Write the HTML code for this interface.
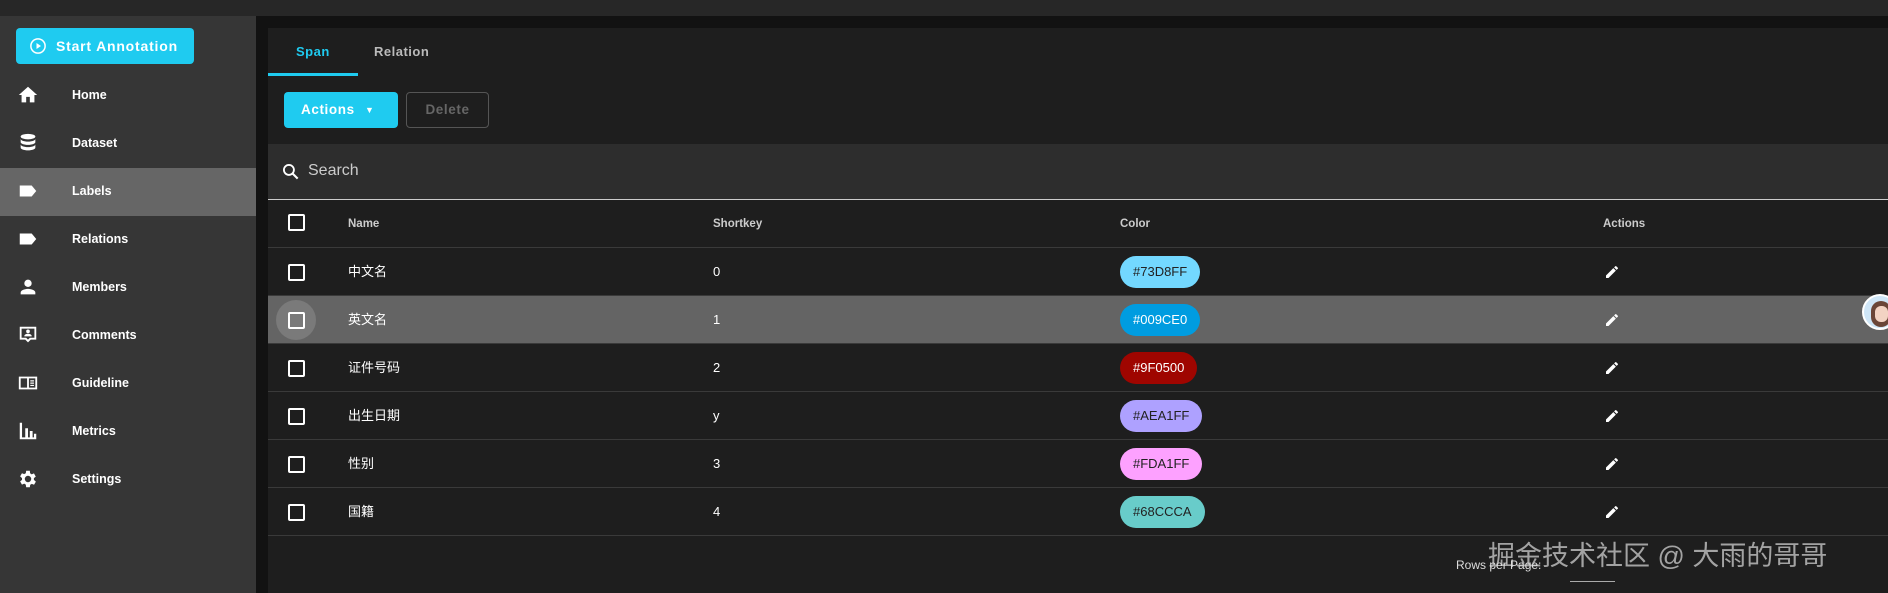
<!DOCTYPE html>
<html><head><meta charset="utf-8"><style>
*{margin:0;padding:0;box-sizing:border-box}
body{width:1888px;height:593px;overflow:hidden;background:#121212;font-family:"Liberation Sans","Noto Sans CJK SC",sans-serif;color:#fff;position:relative}
.abs{position:absolute}
#top{left:0;top:0;width:1888px;height:16px;background:#272727}
#side{left:0;top:16px;width:256px;height:577px;background:#363636}
#card{left:268px;top:28px;width:1620px;height:565px;background:#1e1e1e}
.nav{position:absolute;left:0;width:256px;height:48px;display:flex;align-items:center;font-size:12.5px;font-weight:bold}
.nav svg{position:absolute;left:17px;width:22px;height:22px;fill:#fff}
.nav span{position:absolute;left:72px}
.row{position:absolute;left:268px;width:1620px;height:48px;border-bottom:1px solid #3a3a3a;font-size:13px;line-height:16px}
.cb{position:absolute;left:20px;top:16px;width:17px;height:17px;border:2px solid #fff;border-radius:2px}
.c1{position:absolute;left:80px;top:16px;line-height:16px}
.c2{position:absolute;left:445px;top:16px}
.chip{position:absolute;left:852px;top:8px;height:32px;border-radius:16px;padding:0 13px;line-height:32px;font-size:13px}
.pen{position:absolute;left:1336px;top:16px;width:16px;height:16px}
</style></head><body>
<div id="top" class="abs"></div>
<div id="side" class="abs"></div>
<div class="abs" style="left:16px;top:28px;width:178px;height:36px;background:#1fcbf0;border-radius:4px;font-size:14px;font-weight:bold;letter-spacing:0.8px;line-height:36px">
<svg class="abs" style="left:13px;top:9px" width="18" height="18" viewBox="0 0 24 24"><circle cx="12" cy="12" r="9.5" fill="none" stroke="#fff" stroke-width="2"/><path d="M10 8v8l6-4z" fill="#fff"/></svg>
<span style="position:absolute;left:40px">Start Annotation</span></div>
<div class="abs" style="left:0;top:168px;width:256px;height:48px;background:#666"></div>
<div class="nav" style="top:71px"><svg viewBox="0 0 24 24"><path d="M10 20v-6h4v6h5v-8h3L12 3 2 12h3v8z"/></svg><span>Home</span></div>
<div class="nav" style="top:119px"><svg viewBox="0 0 24 24"><ellipse cx="12" cy="5" rx="8" ry="3"/><path d="M4 7.5c0 1.7 3.6 3 8 3s8-1.3 8-3V11c0 1.7-3.6 3-8 3s-8-1.3-8-3zM4 13.5c0 1.7 3.6 3 8 3s8-1.3 8-3V17c0 1.7-3.6 3-8 3s-8-1.3-8-3z"/></svg><span>Dataset</span></div>
<div class="nav" style="top:167px"><svg viewBox="0 0 24 24"><path d="M3 6h13l5 6-5 6H3z"/></svg><span>Labels</span></div>
<div class="nav" style="top:215px"><svg viewBox="0 0 24 24"><path d="M3 6h13l5 6-5 6H3z"/></svg><span>Relations</span></div>
<div class="nav" style="top:263px"><svg viewBox="0 0 24 24"><circle cx="12" cy="8" r="4"/><path d="M4 20v-2c0-2.7 5.3-4 8-4s8 1.3 8 4v2z"/></svg><span>Members</span></div>
<div class="nav" style="top:311px"><svg viewBox="0 0 24 24"><path d="M3 3h18v14h-6l-3 3-3-3H3zM5 5v10h5l2 2 2-2h5V5z"/><circle cx="12" cy="8" r="2"/><path d="M8 13c0-1.5 2.5-2.3 4-2.3s4 .8 4 2.3v.5H8z"/></svg><span>Comments</span></div>
<div class="nav" style="top:359px"><svg viewBox="0 0 24 24"><path d="M2 5h20v14H2zM4 7v10h7V7zm9 0v10h7V7zm1.5 2h4v1.3h-4zm0 2.5h4v1.3h-4zm0 2.5h4v1.3h-4z"/></svg><span>Guideline</span></div>
<div class="nav" style="top:407px"><svg viewBox="0 0 24 24"><path d="M3 3h2.5v16H9V9h3v10h2V12h3v7h1.5v-4H21v6H3z"/></svg><span>Metrics</span></div>
<div class="nav" style="top:455px"><svg viewBox="0 0 24 24"><path d="M19.4 13a7.5 7.5 0 000-2l2.1-1.6-2-3.5-2.5 1a7 7 0 00-1.7-1L15 3h-4l-.4 2.7a7 7 0 00-1.7 1l-2.5-1-2 3.5L6.5 11a7.5 7.5 0 000 2l-2.1 1.6 2 3.5 2.5-1a7 7 0 001.7 1L11 21h4l.4-2.7a7 7 0 001.7-1l2.5 1 2-3.5zM13 15.5a3.5 3.5 0 110-7 3.5 3.5 0 010 7z" transform="translate(-1 0)"/></svg><span>Settings</span></div>

<div id="card" class="abs"></div>
<div class="abs" style="left:296px;top:44px;font-size:13px;font-weight:bold;color:#1fcbf0;letter-spacing:.5px">Span</div>
<div class="abs" style="left:374px;top:44px;font-size:13px;font-weight:bold;color:#bbb;letter-spacing:.5px">Relation</div>
<div class="abs" style="left:268px;top:73px;width:90px;height:3px;background:#1fcbf0"></div>
<div class="abs" style="left:284px;top:92px;width:114px;height:36px;background:#1fcbf0;border-radius:4px;font-size:13.5px;font-weight:bold;line-height:36px;letter-spacing:.6px"><span style="position:absolute;left:17px">Actions</span><span style="position:absolute;left:81px;top:0;font-size:9px">▼</span></div>
<div class="abs" style="left:406px;top:92px;width:83px;height:36px;border:1px solid #555;border-radius:4px;font-size:13.5px;font-weight:bold;color:#666;line-height:34px;text-align:center;letter-spacing:.6px">Delete</div>
<div class="abs" style="left:268px;top:144px;width:1620px;height:56px;background:#2d2d2d;border-bottom:1.5px solid #ccc"></div>
<svg class="abs" style="left:281px;top:162px" width="20" height="20" viewBox="0 0 24 24"><circle cx="9.5" cy="9.5" r="6" fill="none" stroke="#fff" stroke-width="2.2"/><path d="M14 14l6 6" stroke="#fff" stroke-width="2.5"/></svg>
<div class="abs" style="left:308px;top:162px;font-size:16px;line-height:18px;color:#ccc">Search</div>

<div class="row" style="top:201px;height:47px;font-size:11.5px;font-weight:bold;color:#ccc">
<div class="cb" style="top:13px"></div><div class="c1" style="top:15px">Name</div><div class="c2" style="top:15px">Shortkey</div><div style="position:absolute;left:852px;top:15px">Color</div><div style="position:absolute;left:1335px;top:15px">Actions</div></div>

<div class="row" style="top:248px"><div class="cb"></div><div class="c1">中文名</div><div class="c2">0</div><div class="chip" style="background:#73d8ff;color:#222">#73D8FF</div><svg class="pen" viewBox="0 0 24 24"><path fill="#fff" d="M3 17.25V21h3.75L17.8 9.94l-3.75-3.75zM20.7 7.04a1 1 0 000-1.41l-2.34-2.34a1 1 0 00-1.41 0l-1.830 1.83 3.75 3.75z"/></svg></div>
<div class="row" style="top:296px;background:#646464"><div class="abs" style="left:8px;top:4px;width:40px;height:40px;border-radius:50%;background:#7a7a7a"></div><div class="cb"></div><div class="c1">英文名</div><div class="c2">1</div><div class="chip" style="background:#009ce0">#009CE0</div><svg class="pen" viewBox="0 0 24 24"><path fill="#fff" d="M3 17.25V21h3.75L17.8 9.94l-3.75-3.75zM20.7 7.04a1 1 0 000-1.41l-2.34-2.34a1 1 0 00-1.41 0l-1.83 1.83 3.75 3.75z"/></svg></div>
<div class="row" style="top:344px"><div class="cb"></div><div class="c1">证件号码</div><div class="c2">2</div><div class="chip" style="background:#9f0500">#9F0500</div><svg class="pen" viewBox="0 0 24 24"><path fill="#fff" d="M3 17.25V21h3.75L17.8 9.94l-3.75-3.75zM20.7 7.04a1 1 0 000-1.41l-2.34-2.34a1 1 0 00-1.41 0l-1.83 1.83 3.75 3.75z"/></svg></div>
<div class="row" style="top:392px"><div class="cb"></div><div class="c1">出生日期</div><div class="c2">y</div><div class="chip" style="background:#aea1ff;color:#222">#AEA1FF</div><svg class="pen" viewBox="0 0 24 24"><path fill="#fff" d="M3 17.25V21h3.75L17.8 9.94l-3.75-3.75zM20.7 7.04a1 1 0 000-1.41l-2.34-2.34a1 1 0 00-1.41 0l-1.83 1.83 3.75 3.75z"/></svg></div>
<div class="row" style="top:440px"><div class="cb"></div><div class="c1">性别</div><div class="c2">3</div><div class="chip" style="background:#fda1ff;color:#222">#FDA1FF</div><svg class="pen" viewBox="0 0 24 24"><path fill="#fff" d="M3 17.25V21h3.75L17.8 9.94l-3.75-3.75zM20.7 7.04a1 1 0 000-1.41l-2.34-2.34a1 1 0 00-1.41 0l-1.83 1.83 3.75 3.75z"/></svg></div>
<div class="row" style="top:488px"><div class="cb"></div><div class="c1">国籍</div><div class="c2">4</div><div class="chip" style="background:#68ccca;color:#222">#68CCCA</div><svg class="pen" viewBox="0 0 24 24"><path fill="#fff" d="M3 17.25V21h3.75L17.8 9.94l-3.75-3.75zM20.7 7.04a1 1 0 000-1.41l-2.34-2.34a1 1 0 00-1.41 0l-1.83 1.83 3.75 3.75z"/></svg></div>

<div class="abs" style="left:1456px;top:558px;font-size:12px;color:#ddd">Rows per Page:</div>
<div class="abs" style="left:1570px;top:581px;width:45px;height:1px;background:#aaa"></div>
<div class="abs" style="left:1488px;top:540px;font-size:27px;line-height:32px;color:rgba(220,220,220,.7);white-space:nowrap">掘金技术社区 @ 大雨的哥哥</div>
<div class="abs" style="left:1862px;top:294px;width:36px;height:36px;border-radius:50%;background:#cfe6f7;border:2px solid #fff;overflow:hidden"><div style="position:absolute;left:7px;top:5px;width:20px;height:26px;border-radius:10px;background:#6b4638"></div><div style="position:absolute;left:11px;top:10px;width:13px;height:16px;border-radius:6px;background:#f3d3c3"></div></div>
</body></html>
